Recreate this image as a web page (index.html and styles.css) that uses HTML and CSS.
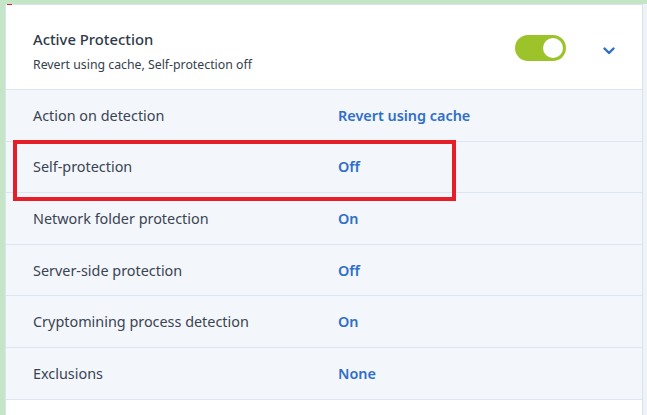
FILE: index.html
```html
<!DOCTYPE html>
<html lang="en">
<head>
<meta charset="utf-8">
<title>Active Protection</title>
<link rel="stylesheet" href="styles.css">
</head>
<body>
<div class="frame">
  <span class="red-mark"></span>
  <div class="card">
    <div class="header">
      <div class="header-text">
        <div class="title">Active Protection</div>
        <div class="subtitle">Revert using cache, Self-protection off</div>
      </div>
      <div class="toggle"><span class="knob"></span></div>
      <svg class="chevron" width="12" height="8" viewBox="0 0 12 8"><polyline points="1.5,1.5 6,6 10.5,1.5" fill="none" stroke="#2f6fcb" stroke-width="2.4" stroke-linecap="round" stroke-linejoin="round"/></svg>
    </div>
    <div class="row"><span class="label">Action on detection</span><span class="value">Revert using cache</span></div>
    <div class="row"><span class="label">Self-protection</span><span class="value">Off</span></div>
    <div class="row"><span class="label">Network folder protection</span><span class="value">On</span></div>
    <div class="row"><span class="label">Server-side protection</span><span class="value">Off</span></div>
    <div class="row"><span class="label">Cryptomining process detection</span><span class="value">On</span></div>
    <div class="row"><span class="label">Exclusions</span><span class="value">None</span></div>
    <div class="footer"></div>
  </div>
  <div class="highlight"></div>
</div>
</body>
</html>
```
FILE: styles.css
```css
html, body {
  margin: 0;
  padding: 0;
}
body {
  width: 647px;
  height: 415px;
  overflow: hidden;
  background: #eff2f6;
  font-family: "Noto Sans", "Open Sans", sans-serif;
}
.frame {
  position: relative;
  height: 411px;
  border-top: 4px solid #c4e6c6;
  border-left: 5px solid #c4e6c6;
  display: flex;
}
.red-mark {
  position: absolute;
  left: 2px;
  top: 0;
  width: 5px;
  height: 1px;
  background: #e8202a;
}
.card {
  width: 636px;
  border: 1px solid #d9e2ef;
  border-bottom: none;
  background: #ffffff;
  display: flex;
  flex-direction: column;
}
.header {
  height: 84px;
  display: flex;
  align-items: center;
  padding: 0 27px 0 27px;
  border-bottom: 1px solid #dde5f0;
}
.header-text {
  flex: 1;
  display: flex;
  flex-direction: column;
  gap: 7px;
  padding-top: 9px;
}
.title {
  font-size: 14.8px;
  font-weight: 500;
  color: #2f3a48;
  line-height: 19px;
}
.subtitle {
  font-size: 12.3px;
  color: #343e4c;
  line-height: 17px;
}
.toggle {
  width: 51px;
  height: 26px;
  border-radius: 13px;
  background: #9cc32a;
  display: flex;
  align-items: center;
  justify-content: flex-end;
  padding-right: 3px;
  box-sizing: border-box;
  margin-right: 37px;
  margin-top: 1px;
}
.knob {
  width: 20px;
  height: 20px;
  border-radius: 50%;
  background: #ffffff;
}
.chevron {
  display: block;
  margin-top: 8px;
}
.row {
  height: 50.6px;
  display: flex;
  align-items: center;
  padding-left: 27px;
  background: #f3f6fb;
  border-bottom: 1px solid #dde5f0;
  font-size: 14.4px;
}
.label {
  width: 305px;
  color: #3a4452;
}
.value {
  color: #2f6fc8;
  font-weight: 600;
}
.footer {
  flex: 1;
  background: #ffffff;
}
.highlight {
  position: absolute;
  left: 8px;
  top: 136px;
  width: 443px;
  height: 61px;
  box-sizing: border-box;
  border: 4px solid #e61e2a;
}
```
